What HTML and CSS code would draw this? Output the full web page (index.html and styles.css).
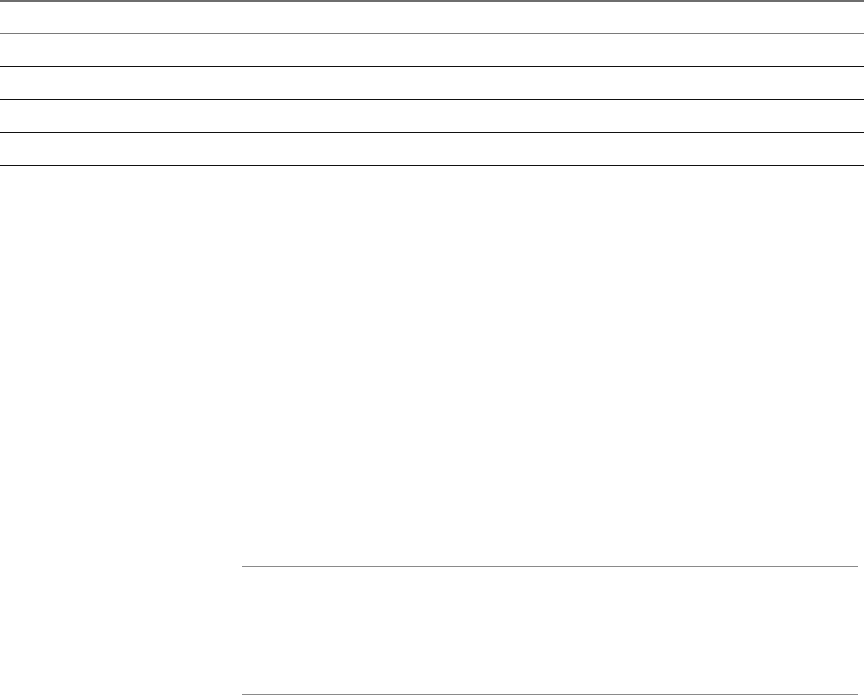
FILE: index.html
```html
<!DOCTYPE html>
<html>
<head>
<meta charset="utf-8">
<link rel="stylesheet" href="styles.css">
</head>
<body>
<div class="page">
  <div class="topbar"></div>
  <div class="rows">
    <div class="row row-light"></div>
    <div class="row"></div>
    <div class="row"></div>
    <div class="row"></div>
    <div class="row"></div>
  </div>
  <div class="content">
    <div class="panel"></div>
  </div>
</div>
</body>
</html>
```
FILE: styles.css
```css
html, body {
  margin: 0;
  padding: 0;
  background: #ffffff;
  font-family: "Liberation Sans", Arial, sans-serif;
}
.page {
  width: 864px;
  height: 695px;
  display: flex;
  flex-direction: column;
  overflow: hidden;
}
.topbar {
  height: 2px;
  background: #6e6e6e;
}
.rows {
  display: flex;
  flex-direction: column;
}
.row {
  height: 32px;
  border-bottom: 1px solid #111111;
}
.row-light {
  height: 31px;
  border-bottom: 1px solid #7a7a7a;
}
.content {
  flex: 1;
  display: flex;
  flex-direction: column;
  justify-content: flex-end;
  padding-left: 242px;
  padding-right: 6px;
}
.panel {
  height: 127px;
  border-top: 1px solid #8a8a8a;
  border-bottom: 1px solid #8a8a8a;
}
```
